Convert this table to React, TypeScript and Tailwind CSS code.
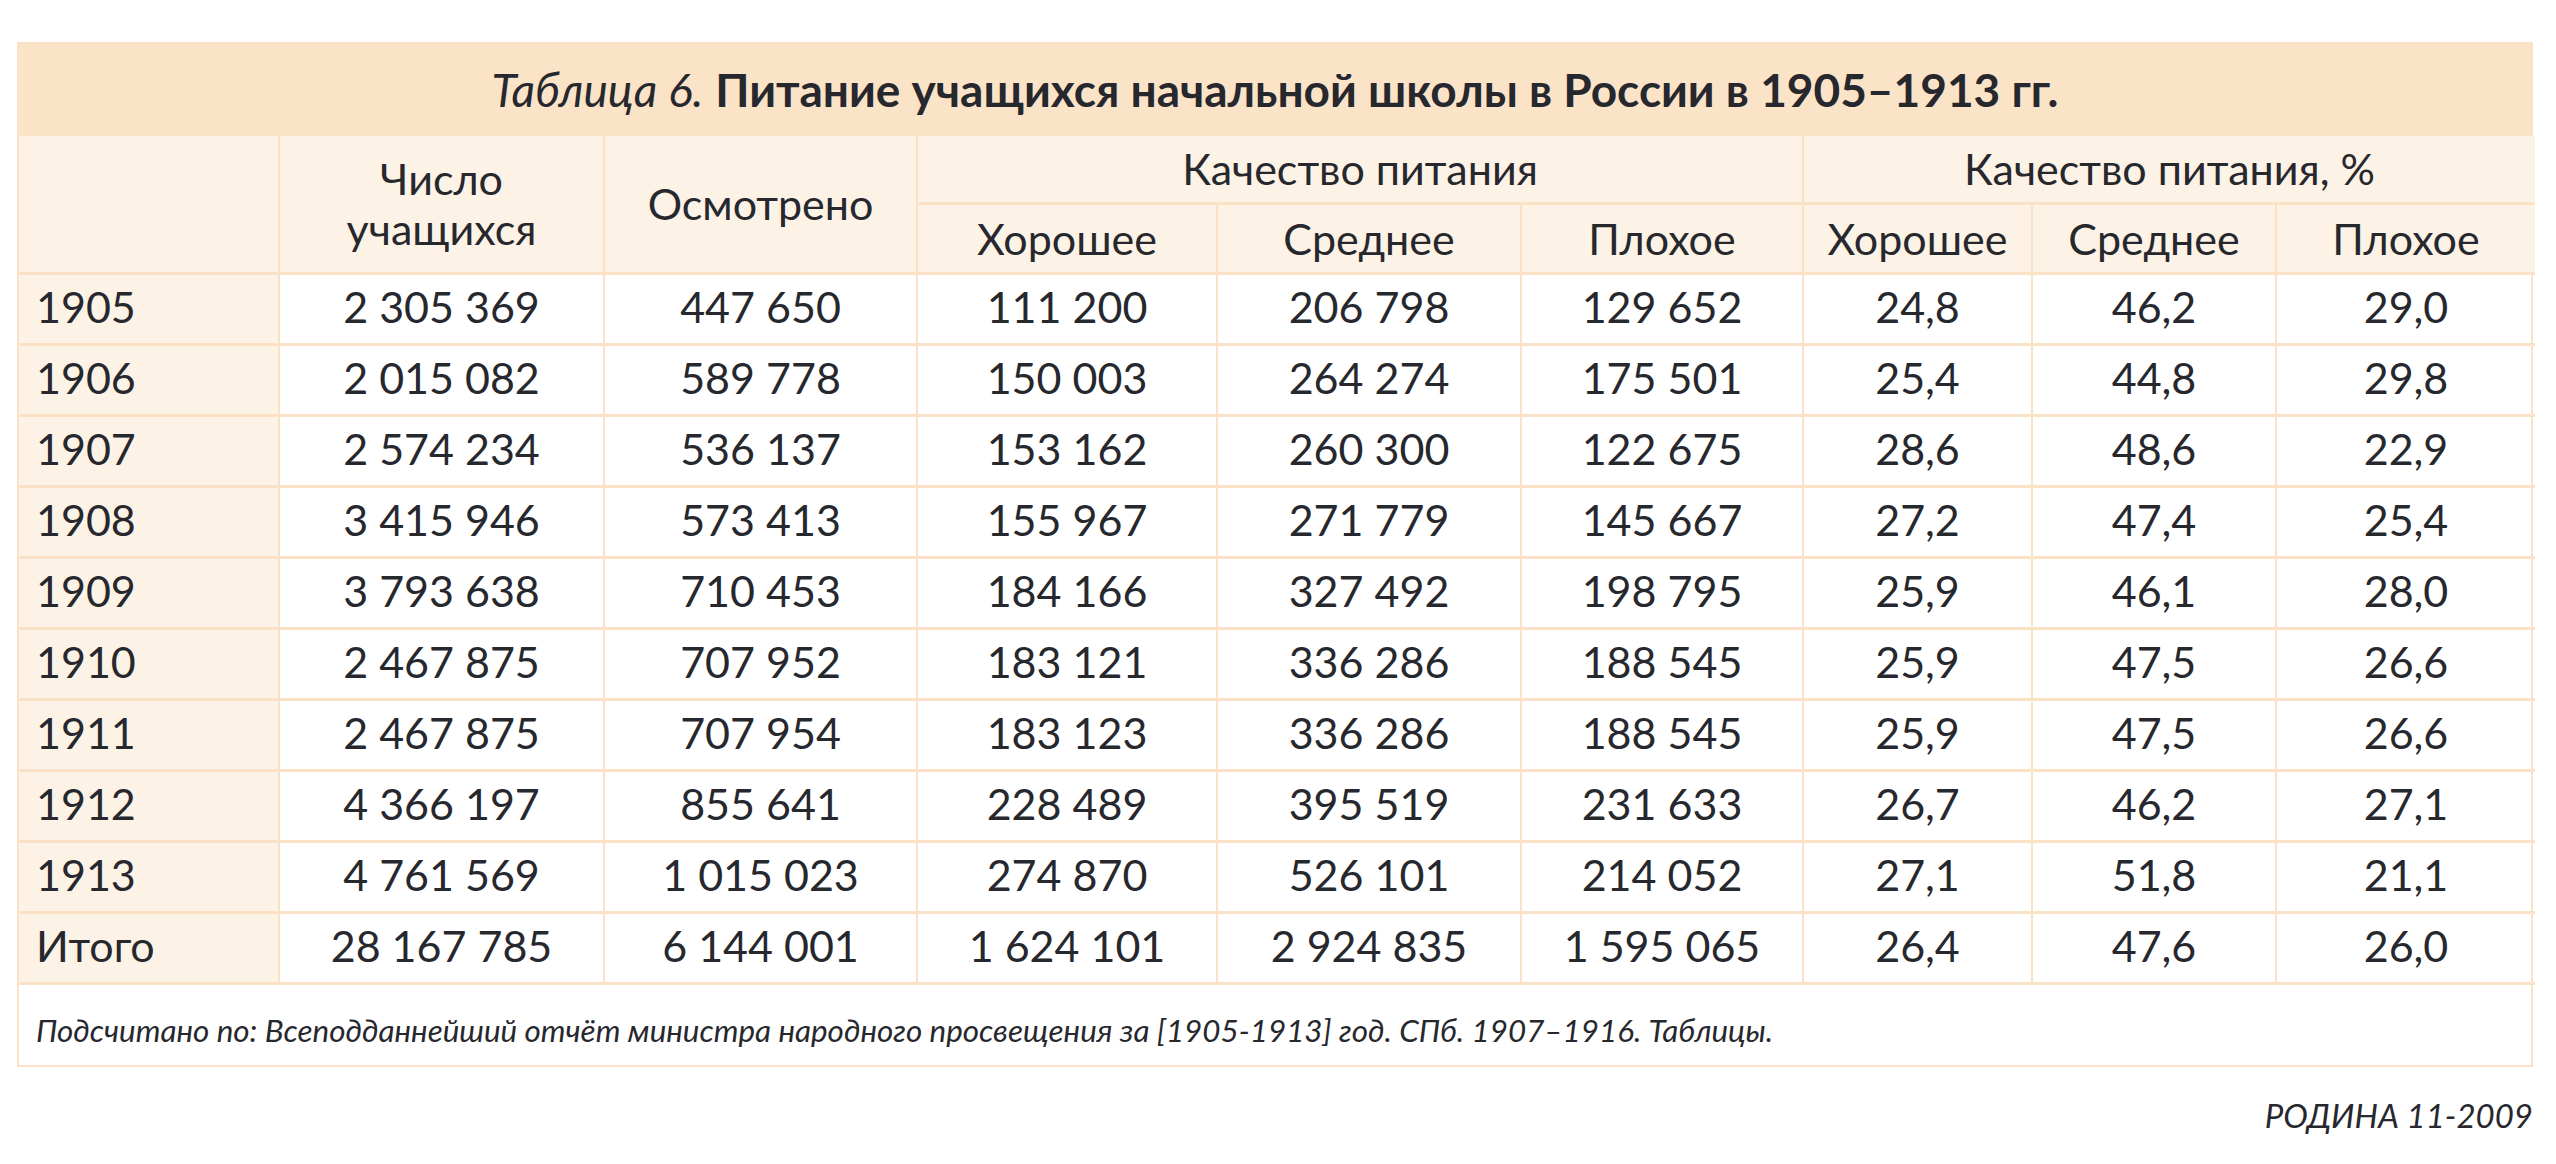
const FONT = "font-['Lato','Noto_Sans',sans-serif]";

const rows: string[][] = [
  ["1905", "2 305 369", "447 650", "111 200", "206 798", "129 652", "24,8", "46,2", "29,0"],
  ["1906", "2 015 082", "589 778", "150 003", "264 274", "175 501", "25,4", "44,8", "29,8"],
  ["1907", "2 574 234", "536 137", "153 162", "260 300", "122 675", "28,6", "48,6", "22,9"],
  ["1908", "3 415 946", "573 413", "155 967", "271 779", "145 667", "27,2", "47,4", "25,4"],
  ["1909", "3 793 638", "710 453", "184 166", "327 492", "198 795", "25,9", "46,1", "28,0"],
  ["1910", "2 467 875", "707 952", "183 121", "336 286", "188 545", "25,9", "47,5", "26,6"],
  ["1911", "2 467 875", "707 954", "183 123", "336 286", "188 545", "25,9", "47,5", "26,6"],
  ["1912", "4 366 197", "855 641", "228 489", "395 519", "231 633", "26,7", "46,2", "27,1"],
  ["1913", "4 761 569", "1 015 023", "274 870", "526 101", "214 052", "27,1", "51,8", "21,1"],
  ["Итого", "28 167 785", "6 144 001", "1 624 101", "2 924 835", "1 595 065", "26,4", "47,6", "26,0"],
];

const widths = [260, 325, 313, 300, 304, 282, 229, 244, 259];

const cell = "border-x-2 border-y-[3px] border-[#fbe2c6]";

export default function App() {
  return (
    <div className={`min-h-screen w-full bg-white text-[#27282e] ${FONT}`}>
      <div className="pl-[17px] pr-[23px] pt-[42px]">
        <div className="w-[2516px] border-2 border-[#fbe2c6]">
          <div className="flex h-[92px] items-center justify-center bg-[#fbe3c8] text-[46px] leading-none">
            <span className="italic">Таблица 6.</span>
            <span className="ml-[12px] font-bold">
              Питание учащихся начальной школы в России в 1905–1913 гг.
            </span>
          </div>

          <table className="w-full table-fixed border-collapse text-[43px] leading-none">
            <colgroup>
              {widths.map((w, i) => (
                <col key={i} style={{ width: w }} />
              ))}
            </colgroup>
            <thead>
              <tr className="h-[67px] bg-[#fdf2e6]">
                <th rowSpan={2} className={`${cell} border-t-0 border-l-0`} />
                <th rowSpan={2} className={`${cell} border-t-0 font-normal leading-[50px]`}>
                  Число
                  <br />
                  учащихся
                </th>
                <th rowSpan={2} className={`${cell} border-t-0 font-normal`}>
                  Осмотрено
                </th>
                <th colSpan={3} className={`${cell} border-t-0 font-normal`}>
                  Качество питания
                </th>
                <th colSpan={3} className={`${cell} border-t-0 border-r-0 font-normal`}>
                  Качество питания, %
                </th>
              </tr>
              <tr className="h-[70px] bg-[#fdf2e6]">
                {["Хорошее", "Среднее", "Плохое", "Хорошее", "Среднее"].map((t, i) => (
                  <th key={i} className={`${cell} font-normal`}>
                    {t}
                  </th>
                ))}
                <th className={`${cell} border-r-0 font-normal`}>Плохое</th>
              </tr>
            </thead>
            <tbody>
              {rows.map((r) => (
                <tr key={r[0]} className="h-[71px]">
                  {r.map((v, i) =>
                    i === 0 ? (
                      <td key={i} className={`${cell} border-l-0 bg-[#fdf2e6] pb-[5px] pl-[17px] text-left`}>
                        {v}
                      </td>
                    ) : (
                      <td
                        key={i}
                        className={`${cell} ${i === 8 ? "border-r-0" : ""} pb-[5px] text-center`}
                      >
                        {v}
                      </td>
                    )
                  )}
                </tr>
              ))}
            </tbody>
          </table>

          <div className="flex h-[80px] items-center pl-[17px] pt-[12px] text-[31.4px] italic leading-none">
            Подсчитано по: Всеподданнейший отчёт министра народного просвещения за [1905-1913] год. СПб. 1907–1916. Таблицы.
          </div>
        </div>

        <div className="mt-[32px] w-[2516px] text-right text-[33px] italic leading-none">
          РОДИНА 11-2009
        </div>
      </div>
    </div>
  );
}
